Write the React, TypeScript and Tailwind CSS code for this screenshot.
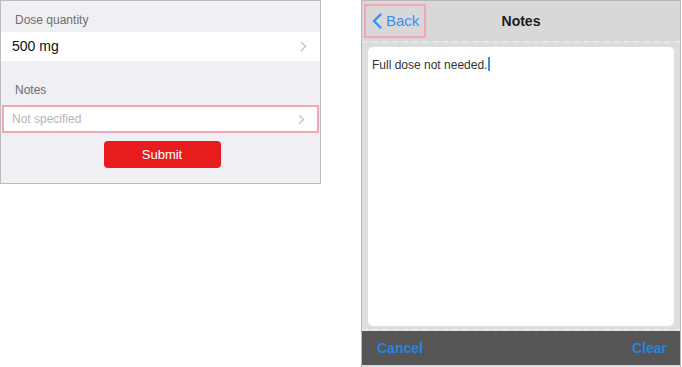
import React from "react";

function Chevron() {
  return (
    <svg width="7" height="11" viewBox="0 0 7 11" fill="none">
      <polyline points="1,1 5.5,5.5 1,10" stroke="#c4c4c8" strokeWidth="1.4" fill="none" />
    </svg>
  );
}

export default function App() {
  return (
    <div
      className="flex w-[682px] h-[367px] bg-white"
      style={{ fontFamily: '"Liberation Sans", Arial, sans-serif' }}
    >
      {/* Left panel */}
      <div className="w-[321px] h-[184px] border border-[#bcbcbc] bg-[#efeff4] flex flex-col">
        <div className="h-[31px] pt-[12px] pl-[14px] text-[12px] leading-[14px] text-[#6d6d72]">
          Dose quantity
        </div>
        <div className="h-[29px] bg-white flex items-center justify-between pl-[11px] pr-[13px]">
          <span className="text-[14px] text-[#111]">500 mg</span>
          <Chevron />
        </div>
        <div className="h-[44px] flex items-end pb-[8px] pl-[14px] text-[12px] leading-[14px] text-[#6d6d72]">
          Notes
        </div>
        <div className="h-[28px] mx-px bg-white border-2 border-[#f3a6b8] flex items-center justify-between pl-[8px] pr-[12px]">
          <span className="text-[12px] text-[#b5b5b8]">Not specified</span>
          <Chevron />
        </div>
        <div className="flex justify-center pt-[8px] pl-[3px]">
          <button className="w-[117px] h-[27px] rounded-[4px] bg-[#e81b1e] text-white text-[13px] flex items-center justify-center">
            Submit
          </button>
        </div>
      </div>

      {/* Right panel */}
      <div className="ml-[40px] w-[320px] h-[367px] border-x border-t border-[#b8b8b8] bg-[#dedede] flex flex-col">
        <div className="h-[40px] bg-[#d8d8d8] grid grid-cols-[1fr_auto_1fr] items-center">
          <div className="flex items-center">
            <div className="ml-[2px] w-[62px] h-[34px] border-2 border-[#f3a6b8] flex items-center gap-[4px] pl-[6px]">
              <svg width="10" height="16" viewBox="0 0 10 16" fill="none">
                <polyline points="8.5,1.5 2,8 8.5,14.5" stroke="#3a8ef2" strokeWidth="2.4" fill="none" strokeLinecap="round" strokeLinejoin="round" />
              </svg>
              <span className="text-[15px] text-[#3a8ef2]">Back</span>
            </div>
          </div>
          <div className="text-[14px] font-bold text-[#1c1c1c]">Notes</div>
          <div />
        </div>
        <div className="h-[6px] border-t-2 border-dashed border-[#e6e6e6] bg-[#dcdcdc]" />
        <div className="flex-1 mx-[6px] bg-white rounded-[5px] pt-[5px] pl-[4px]">
          <span className="text-[12px] leading-[14px] text-[#333]">Full dose not needed.</span>
          <span className="inline-block align-middle w-[2px] h-[14px] bg-[#3a8ef2] ml-px -mt-[2px]" />
        </div>
        <div className="h-[5px] border-b-2 border-dashed border-[#e8e8e8]" />
        <div className="h-[34px] bg-[#555555] flex items-center justify-between pl-[15px] pr-[13px]">
          <span className="text-[14px] font-bold text-[#2a83e0]">Cancel</span>
          <span className="text-[14px] font-bold text-[#2a83e0]">Clear</span>
        </div>
        <div className="h-[2px] bg-[#dcdcdc]" />
      </div>
    </div>
  );
}
